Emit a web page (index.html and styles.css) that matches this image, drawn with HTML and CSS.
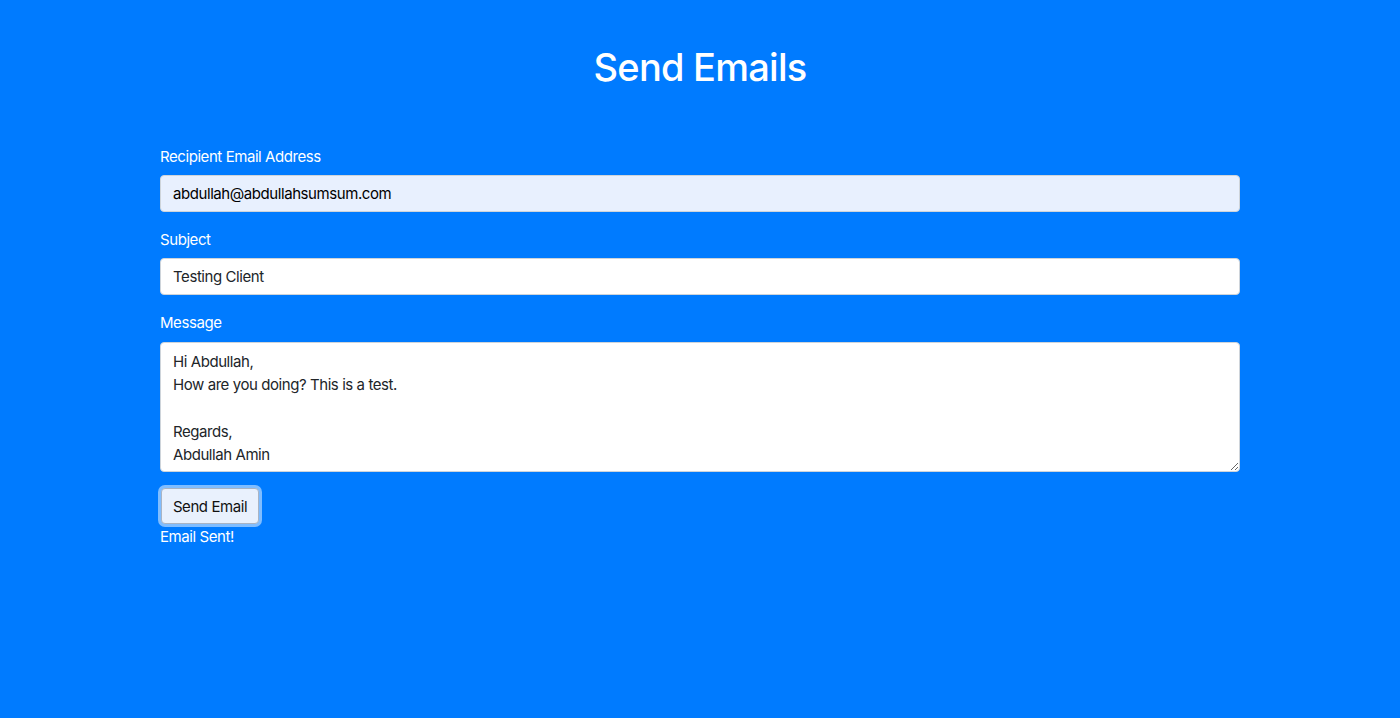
FILE: index.html
```html
<!DOCTYPE html>
<html>
<head>
<meta charset="utf-8">
<link rel="stylesheet" href="styles.css">
</head>
<body>
<main class="page">
  <h1 class="title">Send Emails</h1>
  <form class="form">
    <div class="group">
      <label class="label" for="to">Recipient Email Address</label>
      <input class="field autofill" id="to" type="email" value="abdullah@abdullahsumsum.com">
    </div>
    <div class="group">
      <label class="label" for="subject">Subject</label>
      <input class="field" id="subject" type="text" value="Testing Client">
    </div>
    <div class="group">
      <label class="label" for="msg">Message</label>
      <textarea class="field area" id="msg">Hi Abdullah,
How are you doing? This is a test.

Regards,
Abdullah Amin</textarea>
    </div>
    <button class="btn" type="button">Send Email</button>
    <p class="status">Email Sent!</p>
  </form>
</main>
</body>
</html>
```

FILE: styles.css
```css
* { box-sizing: border-box; }
html, body { margin: 0; height: 100%; }
body {
  background: #007bff;
  font-family: Inter, "Noto Sans", "Liberation Sans", sans-serif;
  color: #fff;
  letter-spacing: -0.43px;
}
.page {
  width: 1080px;
  margin: 0 auto;
  padding-top: 44px;
}
.title {
  margin: 0 0 55px;
  text-align: center;
  font-size: 38px;
  font-weight: 500;
  line-height: 46px;
  letter-spacing: -0.75px;
}
.form { display: flex; flex-direction: column; align-items: flex-start; }
.group { width: 100%; margin-bottom: 16px; display: flex; flex-direction: column; }
.group:nth-child(3) { margin-bottom: 16px; }
.label {
  font-size: 15px;
  line-height: 24px;
  margin-bottom: 6px;
}
.group:nth-child(3) .label { margin-bottom: 7px; }
.field {
  width: 100%;
  height: 37px;
  padding: 0 12px;
  border: 1px solid #ced4da;
  border-radius: 4px;
  background: #fff;
  font-family: inherit;
  font-size: 15px;
  letter-spacing: -0.43px;
  color: #212529;
  outline: none;
}
.autofill { background: #e8f0fe; color: #000; }
.area {
  height: 130px;
  padding: 7px 12px 5px;
  line-height: 23.3px;
  resize: vertical;
  display: block;
}
.btn {
  margin-left: 1px;
  width: 98px;
  height: 36px;
  border: 1px solid #a9b4c4;
  border-radius: 4px;
  background: #e9f1fd;
  color: #111;
  font-family: inherit;
  font-size: 15px;
  letter-spacing: -0.43px;
  box-shadow: 0 0 0 3px #80bdff;
}
.status {
  margin: 2px 0 0;
  font-size: 15px;
  line-height: 22px;
}
```
